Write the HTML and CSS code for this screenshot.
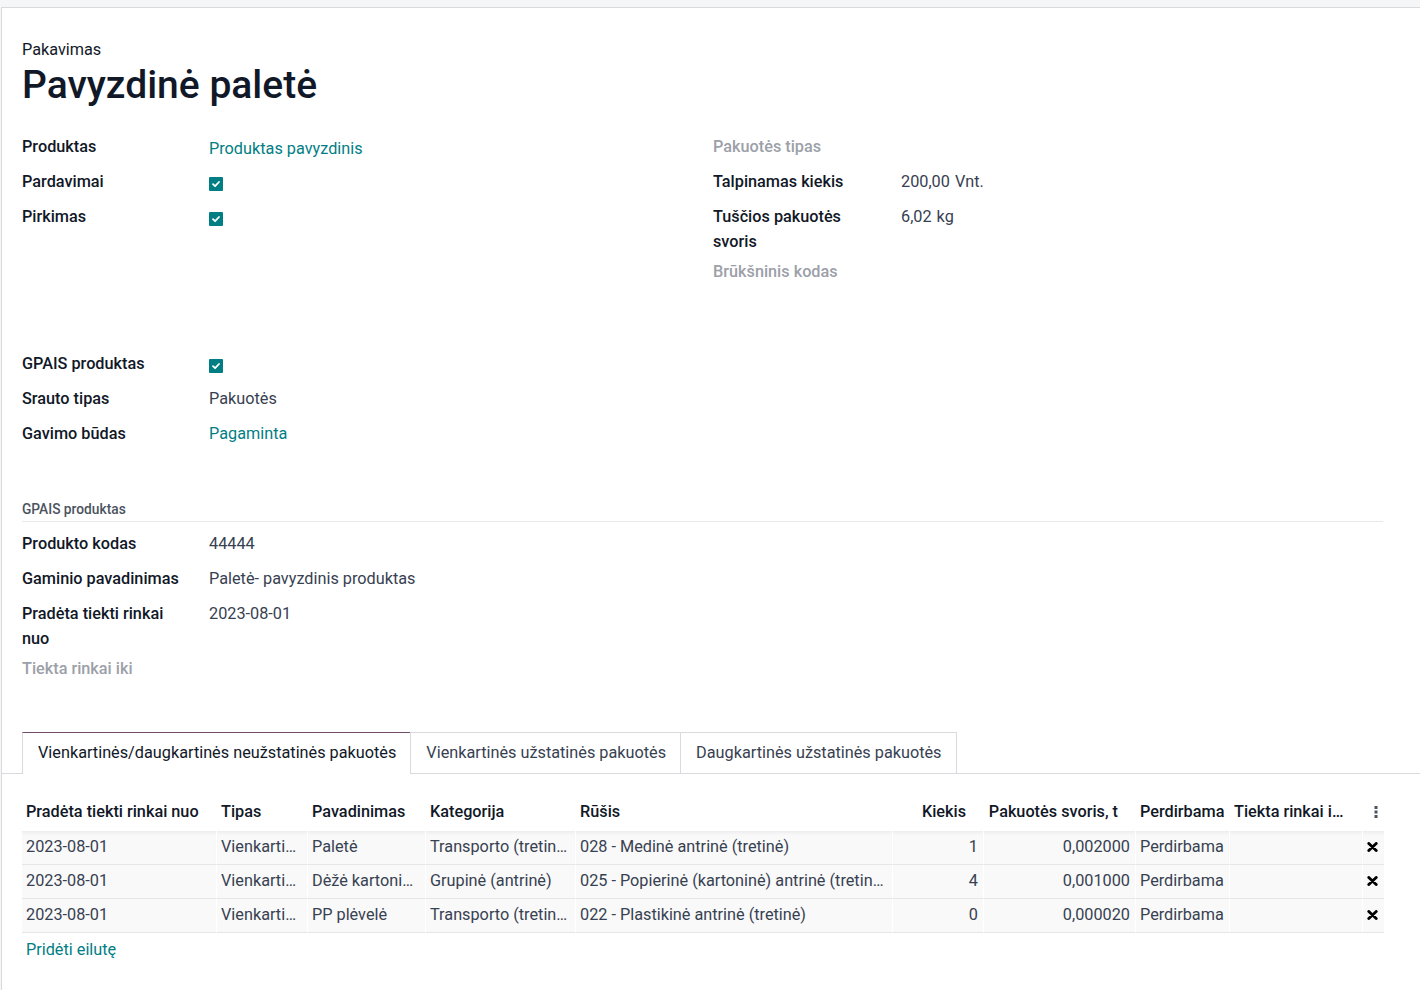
FILE: index.html
```html
<!DOCTYPE html>
<html lang="lt">
<head>
<meta charset="utf-8">
<title>Pavyzdinė paletė</title>
<link rel="stylesheet" href="styles.css">
</head>
<body>
<div class="sheet">
  <div class="title-block">
    <div class="title-label">Pakavimas</div>
    <h1 class="title">Pavyzdinė paletė</h1>
  </div>

  <div class="group-pair">
    <div class="group">
      <div class="lbl">Produktas</div>
      <div class="val"><span class="link m2o">Produktas pavyzdinis</span></div>
      <div class="lbl">Pardavimai</div>
      <div class="val"><span class="cb"><svg viewBox="0 0 14 14" width="14" height="14"><path d="M4 7.2 L6.1 9.2 L10 5" fill="none" stroke="#fff" stroke-width="1.8" stroke-linecap="round" stroke-linejoin="round"/></svg></span></div>
      <div class="lbl">Pirkimas</div>
      <div class="val"><span class="cb"><svg viewBox="0 0 14 14" width="14" height="14"><path d="M4 7.2 L6.1 9.2 L10 5" fill="none" stroke="#fff" stroke-width="1.8" stroke-linecap="round" stroke-linejoin="round"/></svg></span></div>
    </div>
    <div class="group right">
      <div class="lbl empty">Pakuotės tipas</div>
      <div class="val"></div>
      <div class="lbl">Talpinamas kiekis</div>
      <div class="val">200,00<span class="unit">Vnt.</span></div>
      <div class="lbl">Tuščios pakuotės svoris</div>
      <div class="val">6,02<span class="unit">kg</span></div>
      <div class="lbl empty">Brūkšninis kodas</div>
      <div class="val"></div>
    </div>
  </div>

  <div class="group single gpais-top">
    <div class="lbl">GPAIS produktas</div>
    <div class="val"><span class="cb"><svg viewBox="0 0 14 14" width="14" height="14"><path d="M4 7.2 L6.1 9.2 L10 5" fill="none" stroke="#fff" stroke-width="1.8" stroke-linecap="round" stroke-linejoin="round"/></svg></span></div>
    <div class="lbl">Srauto tipas</div>
    <div class="val">Pakuotės</div>
    <div class="lbl">Gavimo būdas</div>
    <div class="val"><span class="link">Pagaminta</span></div>
  </div>

  <div class="separator">GPAIS produktas</div>

  <div class="group single">
    <div class="lbl">Produkto kodas</div>
    <div class="val">44444</div>
    <div class="lbl">Gaminio pavadinimas</div>
    <div class="val">Paletė- pavyzdinis produktas</div>
    <div class="lbl">Pradėta tiekti rinkai nuo</div>
    <div class="val">2023-08-01</div>
    <div class="lbl empty">Tiekta rinkai iki</div>
    <div class="val"></div>
  </div>

  <div class="tabs">
    <div class="tab active">Vienkartinės/daugkartinės neužstatinės pakuotės</div>
    <div class="tab">Vienkartinės užstatinės pakuotės</div>
    <div class="tab">Daugkartinės užstatinės pakuotės</div>
  </div>

  <table class="list">
    <colgroup>
      <col style="width:194px"><col style="width:91px"><col style="width:118px"><col style="width:150px"><col style="width:317px"><col style="width:91px"><col style="width:152px"><col style="width:94px"><col style="width:133px"><col style="width:22px">
    </colgroup>
    <thead>
      <tr>
        <th>Pradėta tiekti rinkai nuo</th>
        <th>Tipas</th>
        <th>Pavadinimas</th>
        <th>Kategorija</th>
        <th>Rūšis</th>
        <th class="num">Kiekis</th>
        <th class="num">Pakuotės svoris, t</th>
        <th class="pd">Perdirbama</th>
        <th class="last">Tiekta rinkai iki</th>
        <th class="opt"><svg viewBox="0 0 4 14" width="4" height="14"><rect x="0.5" y="1" width="3" height="3" fill="#4b5563"/><rect x="0.5" y="5.5" width="3" height="3" fill="#4b5563"/><rect x="0.5" y="10" width="3" height="3" fill="#4b5563"/></svg></th>
      </tr>
    </thead>
    <tbody>
      <tr>
        <td>2023-08-01</td>
        <td>Vienkartinė</td>
        <td>Paletė</td>
        <td>Transporto (tretinė)</td>
        <td>028 - Medinė antrinė (tretinė)</td>
        <td class="num">1</td>
        <td class="num">0,002000</td>
        <td class="pd">Perdirbama</td>
        <td></td>
        <td class="del"><svg viewBox="0 0 11 10" width="11" height="10"><path d="M1.8 1.5 L9.2 8.5 M9.2 1.5 L1.8 8.5" stroke="#000" stroke-width="2.9" stroke-linecap="round"/></svg></td>
      </tr>
      <tr>
        <td>2023-08-01</td>
        <td>Vienkartinė</td>
        <td>Dėžė kartoninė</td>
        <td>Grupinė (antrinė)</td>
        <td>025 - Popierinė (kartoninė) antrinė (tretinė)</td>
        <td class="num">4</td>
        <td class="num">0,001000</td>
        <td class="pd">Perdirbama</td>
        <td></td>
        <td class="del"><svg viewBox="0 0 11 10" width="11" height="10"><path d="M1.8 1.5 L9.2 8.5 M9.2 1.5 L1.8 8.5" stroke="#000" stroke-width="2.9" stroke-linecap="round"/></svg></td>
      </tr>
      <tr>
        <td>2023-08-01</td>
        <td>Vienkartinė</td>
        <td>PP plėvelė</td>
        <td>Transporto (tretinė)</td>
        <td>022 - Plastikinė antrinė (tretinė)</td>
        <td class="num">0</td>
        <td class="num">0,000020</td>
        <td class="pd">Perdirbama</td>
        <td></td>
        <td class="del"><svg viewBox="0 0 11 10" width="11" height="10"><path d="M1.8 1.5 L9.2 8.5 M9.2 1.5 L1.8 8.5" stroke="#000" stroke-width="2.9" stroke-linecap="round"/></svg></td>
      </tr>
      <tr class="add-row">
        <td colspan="10"><span class="link">Pridėti eilutę</span></td>
      </tr>
    </tbody>
  </table>
</div>
</body>
</html>
```

FILE: styles.css
```css
html, body {
  margin: 0;
  padding: 0;
  overflow: hidden;
}
body {
  background: #f5f6f8;
  font-family: Roboto, "Liberation Sans", sans-serif;
  font-size: 16.25px;
  line-height: 1.5;
  color: #374151;
  height: 990px;
}
.sheet {
  margin: 7px 0 0 1px;
  width: 1460px;
  min-height: 990px;
  box-sizing: border-box;
  background: #fff;
  border: 1px solid #d8dadd;
  padding: 30px 77px 0 20px;
}
.title-block {
  margin-bottom: 25px;
}
.title-label {
  color: #111827;
  line-height: 24.4px;
}
.title {
  margin: 0;
  font-size: 39px;
  line-height: 47px;
  font-weight: 500;
  color: #111827;
}
.group-pair {
  display: grid;
  grid-template-columns: 691px 1fr;
}
.group {
  display: grid;
  grid-template-columns: 187px 1fr;
  row-gap: 5px;
  align-content: start;
}
.group.right {
  grid-template-columns: 188px 1fr;
}
.group.single {
  width: 691px;
}
.gpais-top {
  margin-top: 62px;
}
.lbl {
  font-weight: 500;
  color: #111827;
  line-height: 25px;
  padding-right: 20px;
}
.lbl.empty {
  color: #9ca0a8;
}
.val {
  min-height: 30px;
  line-height: 25px;
  color: #374151;
}
.unit {
  margin-left: 5px;
}
.link {
  color: #017e84;
}
.m2o {
  display: inline-block;
  padding-top: 2px;
}
.cb {
  display: inline-flex;
  width: 14px;
  height: 14px;
  margin-top: 8px;
  background: #017e84;
  border-radius: 1px;
}
.separator {
  margin-top: 48px;
  font-size: 13.75px;
  font-weight: 500;
  line-height: 20px;
  color: #4b5360;
  padding-bottom: 2px;
  border-bottom: 1px solid #e7e9ed;
  margin-bottom: 9px;
}
.tabs {
  display: flex;
  margin: 46px -77px 0 -20px;
  padding-left: 20px;
  border-bottom: 1px solid #d8dadd;
}
.tab {
  padding: 8px 14px 7px 15px;
  border: 1px solid #d8dadd;
  border-bottom: none;
  margin-right: -1px;
  line-height: 24.4px;
  color: #374151;
  background: #fff;
}
.tab.active {
  color: #111827;
  border-top-color: #714b67;
  margin-bottom: -1px;
  padding-bottom: 8px;
}
.list {
  margin-top: 19px;
  border-collapse: separate;
  border-spacing: 0;
  table-layout: fixed;
  width: 1362px;
}
.list th,
.list td {
  white-space: nowrap;
  overflow: hidden;
  text-overflow: ellipsis;
  text-align: left;
  padding: 0 6px 0 4px;
}
.list th:first-child,
.list td:first-child {
  padding-left: 4px;
}
.list th {
  font-weight: 500;
  color: #111827;
  height: 38px;
  padding-left: 5px;
}
.list th.num {
  text-align: right;
  padding-right: 17px;
}
.list th.pd,
.list td.pd {
  padding-right: 3px;
}
.list th.last {
  padding-right: 18px;
}
.list td.num {
  text-align: right;
  padding-right: 5px;
}
.list th.opt {
  padding: 0;
  text-align: center;
  vertical-align: middle;
}
.list th.opt svg {
  display: block;
  margin: 1px 0 0 12px;
}
.list tbody tr {
  height: 34px;
}
.list td {
  height: 34px;
  box-sizing: border-box;
  background: #f9f9f9;
  border-left: 1px solid #fff;
  border-bottom: 1px solid #e6e6e6;
  color: #374151;
}
.list td:first-child {
  border-left: none;
}
.list tbody tr:first-child td {
  box-shadow: inset 0 4px 4px -3px rgba(0, 0, 0, 0.08);
}
.list td.del {
  padding: 0;
  text-align: center;
}
.list td.del svg {
  display: block;
  margin: 0 0 0 4px;
}
.list tr.add-row td {
  background: #fff;
  border: none;
  padding-left: 4px;
  box-shadow: none;
  height: 32px;
}
```
